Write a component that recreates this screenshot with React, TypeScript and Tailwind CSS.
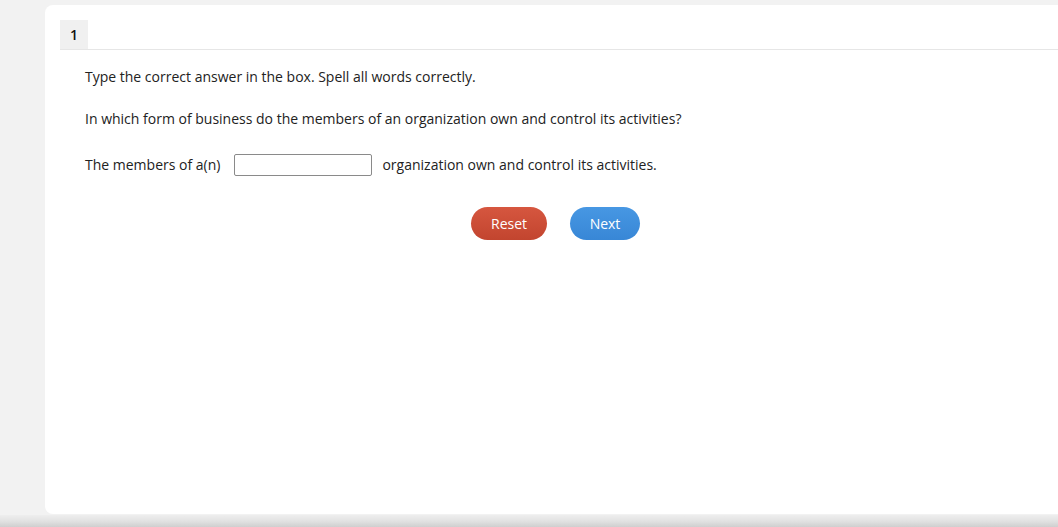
export default function App() {
  return (
    <div className="relative h-[527px] w-[1058px] overflow-hidden bg-[#f2f2f2] font-['Open_Sans',sans-serif] text-[14px] text-[#222]">
      <div className="ml-[45px] mt-[5px] h-[509px] w-[1040px] rounded-l-[8px] bg-white pl-[15px] pt-[15px]">
        <div className="flex border-b border-[#e6e6e6]">
          <div className="flex h-[29px] w-[28px] items-center justify-center bg-[#f0f0f0] font-semibold text-[#111]">
            1
          </div>
        </div>
        <div className="pl-[25px]">
          <p className="mt-[17px] leading-[20px]">Type the correct answer in the box. Spell all words correctly.</p>
          <p className="mt-[22px] leading-[20px]">
            In which form of business do the members of an organization own and control its activities?
          </p>
          <div className="mt-[25px] flex items-center leading-[20px]">
            <span>The members of a(n)</span>
            <input
              type="text"
              className="ml-[14px] mr-[10px] h-[22px] w-[138px] rounded-[2px] border border-[#8a8a8a] bg-white px-1 outline-none"
            />
            <span>organization own and control its activities.</span>
          </div>
          <div className="mt-[31px] flex gap-[23px] pl-[386px]">
            <button className="h-[33px] w-[76px] rounded-full bg-gradient-to-b from-[#d6563f] to-[#c2452f] text-[14px] font-medium text-white">
              Reset
            </button>
            <button className="h-[33px] w-[70px] rounded-full bg-gradient-to-b from-[#4797e3] to-[#3887d6] text-[14px] font-medium text-white">
              Next
            </button>
          </div>
        </div>
      </div>
      <div className="absolute bottom-0 left-0 h-[12px] w-full bg-gradient-to-b from-[#eeeeee] via-[#e2e2e2] to-[#cfcfcf]" />
    </div>
  );
}
